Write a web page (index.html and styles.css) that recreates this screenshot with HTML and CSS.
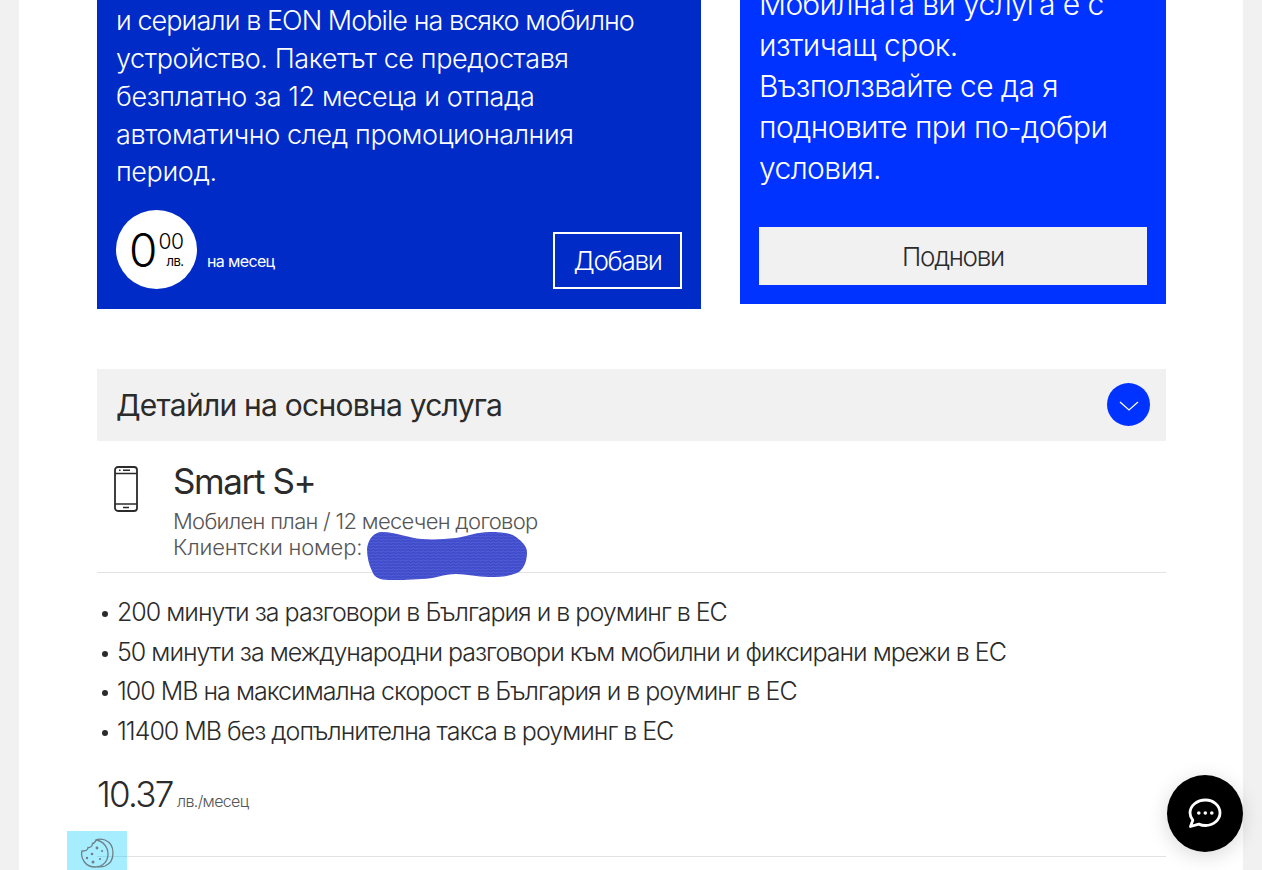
FILE: index.html
```html
<!DOCTYPE html>
<html lang="bg">
<head>
<meta charset="utf-8">
<title>Услуги</title>
<link rel="stylesheet" href="styles.css">
</head>
<body>
<main class="page">
  <section class="cards">
    <article class="card card-offer">
      <p class="card-text">и сериали в EON Mobile на всяко мобилно устройство. Пакетът се предоставя безплатно за 12 месеца и отпада автоматично след промоционалния период.</p>
      <div class="offer-foot">
        <div class="price-circle">
          <span class="pc-int">0</span>
          <span class="pc-side"><span class="pc-dec">00</span><span class="pc-cur">лв.</span></span>
        </div>
        <span class="per-month">на месец</span>
        <a class="btn-outline">Добави</a>
      </div>
    </article>
    <article class="card card-renew">
      <p class="renew-text">Мобилната ви услуга е с изтичащ срок. Възползвайте се да я подновите при по-добри условия.</p>
      <a class="btn-solid">Поднови</a>
    </article>
  </section>

  <header class="acc-head">
    <h2 class="acc-title">Детайли на основна услуга</h2>
    <span class="acc-toggle">
      <svg width="20" height="10" viewBox="0 0 20 10"><path d="M1 1l9 8 9-8" fill="none" stroke="#fff" stroke-width="1.3"/></svg>
    </span>
  </header>

  <section class="service">
    <svg class="phone" width="24" height="46" viewBox="0 0 24 46">
      <rect x="1" y="1" width="22" height="44" rx="3" fill="none" stroke="#2b2b2b" stroke-width="1.8"/>
      <path d="M1 7.500h22M1 38h22" stroke="#2b2b2b" stroke-width="1.400"/>
      <path d="M9 41.500h6M9 4.200h7M5 4.200h1.500" stroke="#2b2b2b" stroke-width="1.400"/>
    </svg>
    <div class="service-info">
      <h3 class="service-name">Smart S+</h3>
      <p class="service-sub">Мобилен план / 12 месечен договор</p>
      <p class="service-sub service-client">Клиентски номер:
        <svg class="scribble" width="160" height="50" viewBox="0 0 160 50">
          <defs>
            <pattern id="scr" width="5" height="3" patternUnits="userSpaceOnUse">
              <rect width="5" height="3" fill="#3f4bca"/>
              <path d="M0 1.500q1.250-1.200 2.500 0t2.500 0" fill="none" stroke="#5b68dc" stroke-width=".7"/>
            </pattern>
          </defs>
          <path d="M0 17C1 7 7 0 15 0c14 0 26 6 40 7 12 1 22 0 34-1 12-2 22-6 33-6 13 0 23 1 27 5 7 5 11 10 11 15 0 8-2 15-8 20-8 4-18 5-30 5-12 0-22-3-33-3-12 0-22 5-34 5-13 1-26 1-33 1C12 48 7 45 5 39 2 33 0 25 0 17z" fill="url(#scr)"/>
        </svg>
      </p>
    </div>
  </section>

  <ul class="features">
    <li class="feature">200 минути за разговори в България и в роуминг в ЕС</li>
    <li class="feature">50 минути за международни разговори към мобилни и фиксирани мрежи в ЕС</li>
    <li class="feature">100 MB на максимална скорост в България и в роуминг в ЕС</li>
    <li class="feature">11400 MB без допълнителна такса в роуминг в ЕС</li>
  </ul>

  <div class="price"><span class="price-num">10.37</span> <span class="price-unit">лв./месец</span></div>
</main>

<button class="cookie" aria-label="Бисквитки">
  <svg width="34" height="30" viewBox="0 0 34 30" fill="none" stroke="#6f7f86" stroke-width="1.300">
    <path d="M16 2c2-1 6-1 9 0 5 2 8 7 8 13s-3 11-8 13c-3 1-6 1-8 .5"/>
    <path d="M16 2c-1 2.500-2 3.500-3.500 3.500 0 2.500-2 4.500-4.500 4 0 2-2 3.500-6 3.500C0 21 6 29 15 29c8 0 13-6 13-13S23 3 16 2z"/>
    <g fill="#6f7f86" stroke="none"><circle cx="17" cy="10" r="1.400"/><circle cx="22" cy="13" r="1.100"/><circle cx="12" cy="16" r="1.300"/><circle cx="7" cy="20" r="1.200"/><circle cx="13" cy="24" r="1.500"/><circle cx="20" cy="21" r="1.100"/></g>
  </svg>
</button>
<button class="chat" aria-label="Чат">
  <svg width="34" height="31" viewBox="0 0 34 31" fill="none">
    <path d="M17.500 2C25.500 2 32 7.800 32 14.800S25.500 27.500 17.500 27.500c-2.400 0-4.700-.5-6.700-1.400L2.500 28.500l2.300-6.300C3 20 2 17.500 2 14.800 2 7.800 9 2 17.500 2z" stroke="#fff" stroke-width="2.800" stroke-linejoin="round"/>
    <circle cx="10.800" cy="15" r="1.800" fill="#fff"/><circle cx="17.300" cy="15" r="1.800" fill="#fff"/><circle cx="23.800" cy="15" r="1.800" fill="#fff"/>
  </svg>
</button>
</body>
</html>
```
FILE: styles.css
```css
* { box-sizing: border-box; }
html, body { margin: 0; height: 870px; overflow: hidden; }
body {
  background: #f1f1f1;
  font-family: Inter, "Noto Sans", sans-serif;
  font-weight: 300;
  color: #2b2b2b;
}
p, h2, h3, ul { margin: 0; padding: 0; font-weight: 300; }
.page {
  margin: 0 19px;
  padding: 0 77px 0 78px;
  background: #fff;
  height: 870px;
  overflow: hidden;
}
.cards {
  display: flex;
  align-items: flex-start;
  gap: 39px;
  height: 309px;
}
.card { flex: none; color: #fff; overflow: hidden; }
.card-offer {
  width: 604px;
  height: 309px;
  padding: 0 19px 20px;
  background: #012bc7;
  display: flex;
  flex-direction: column;
  justify-content: flex-end;
}
.card-text {
  font-size: 27px;
  line-height: 37.700px;
  letter-spacing: -.015em;
  max-width: 550px;
  flex: none;
}
.card-text::first-line { letter-spacing: -.035em; }
.offer-foot { display: flex; align-items: flex-end; margin-top: 19px; flex: none; }
.price-circle {
  width: 81px; height: 79px;
  border-radius: 50%;
  background: #fff;
  color: #000;
  display: flex;
  align-items: center;
  padding-left: 13px;
  gap: 1px;
}
.pc-int { font-size: 46px; line-height: 1; }
.pc-side { display: flex; flex-direction: column; align-items: flex-end; }
.pc-dec { font-size: 21px; line-height: 22px; letter-spacing: -.02em; }
.pc-cur { font-size: 13px; line-height: 16px; font-weight: 400; letter-spacing: -.04em; }
.per-month { font-size: 16px; font-weight: 400; margin: 0 0 18px 10px; letter-spacing: -.04em; }
.btn-outline {
  margin-left: auto;
  width: 129px; height: 57px;
  border: 2px solid #fff;
  font-size: 26px;
  letter-spacing: -.05em;
  display: flex; align-items: center; justify-content: center;
}
.card-renew {
  width: 426px;
  height: 304px;
  padding: 0 19px 19px;
  background: #0033ff;
  display: flex;
  flex-direction: column;
  justify-content: flex-end;
}
.renew-text { font-size: 30px; line-height: 41px; letter-spacing: -.02em; flex: none; }
.btn-solid {
  display: flex; align-items: center; justify-content: center;
  flex: none;
  margin-top: 38px;
  height: 58px;
  background: #f1f1f1;
  color: #2b2b2b;
  font-size: 26px;
  letter-spacing: -.05em;
}
.acc-head {
  margin-top: 60px;
  height: 72px;
  padding: 0 16px 0 19px;
  background: #f1f1f1;
  display: flex; align-items: center; justify-content: space-between;
}
.acc-title { font-size: 30px; color: #2b2b2b; font-weight: 400; letter-spacing: -.025em; }
.acc-toggle {
  width: 43px; height: 43px; border-radius: 50%;
  background: #0033ff;
  display: flex; align-items: center; justify-content: center;
  margin-top: -1px;
  padding-top: 3px;
}
.service {
  display: flex;
  height: 132px;
  padding: 25px 0 0 17px;
  border-bottom: 1px solid #e2e2e2;
}
.phone { flex: none; margin-right: 35px; }
.service-name { font-size: 35px; line-height: 40px; margin-top: -5px; font-weight: 400; letter-spacing: -.04em; }
.service-sub { font-size: 22px; line-height: 26px; color: #555; letter-spacing: -.032em; }
.service-name + .service-sub { margin-top: 7px; }
.service-client { position: relative; letter-spacing: -.009em; }
.scribble { position: absolute; left: 194px; top: -2px; }
.features { list-style: none; margin-top: 20px; }
.feature {
  font-size: 25px; line-height: 39.600px;
  padding-left: 20px;
  letter-spacing: -.04em;
  position: relative;
}
.feature::before {
  content: "";
  position: absolute; left: 5px; top: 18px;
  width: 6px; height: 6px; border-radius: 50%;
  background: #2b2b2b;
}
.price {
  margin-top: 21px;
  padding-bottom: 33px;
  border-bottom: 1px solid #e2e2e2;
  line-height: 44px;
}
.price-num { font-size: 35px; letter-spacing: -.05em; }
.price-unit { font-size: 16px; color: #555; letter-spacing: -.04em; }
.cookie {
  position: fixed; left: 67px; top: 831px;
  width: 60px; height: 39px;
  border: 0; padding: 7px 0 0 0;
  display: flex; justify-content: center;
  background: rgba(0, 204, 255, .35);
}
.chat {
  position: fixed; left: 1167px; top: 775px;
  width: 76px; height: 77px;
  border: 0; border-radius: 50%;
  background: #000;
  box-shadow: 0 4px 20px rgba(0,0,0,.15);
  padding: 0;
  display: flex; align-items: center; justify-content: center;
}
```
